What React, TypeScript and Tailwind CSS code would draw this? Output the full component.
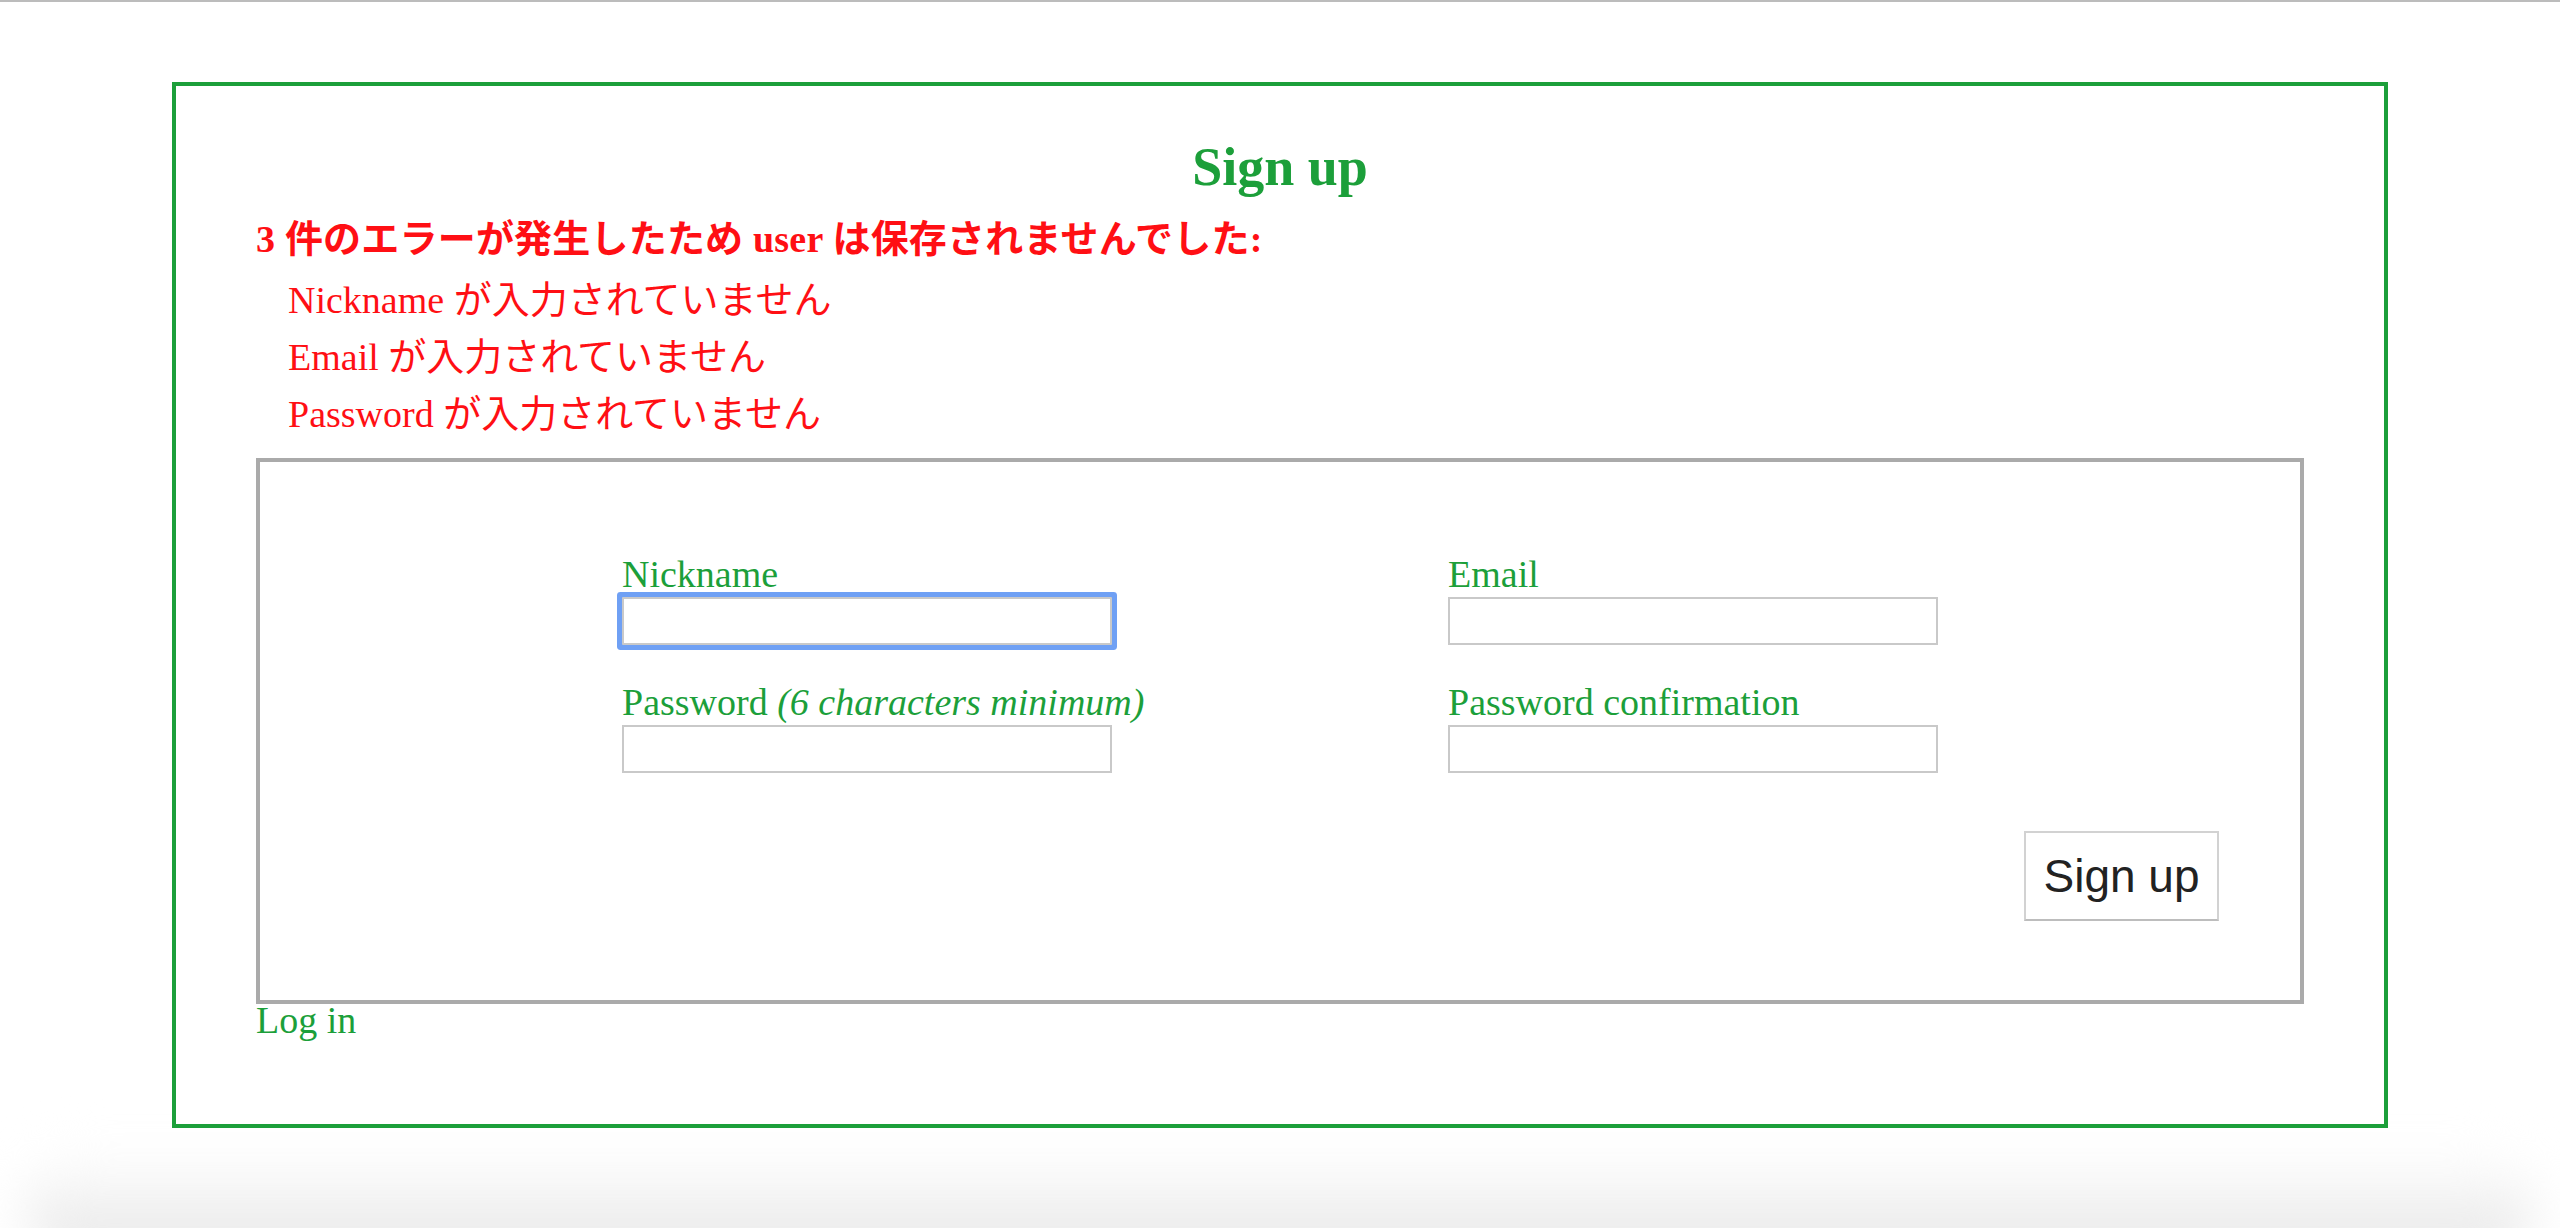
const errors = ['Nickname が入力されていません', 'Email が入力されていません', 'Password が入力されていません'];

const Field = ({ label, hint, focused }: { label: string; hint?: string; focused?: boolean }) => (
  <div className="flex flex-col">
    <label className="whitespace-nowrap text-[38px] leading-[44px] text-[#1c9f3a]">
      {label}
      {hint && <em> {hint}</em>}
    </label>
    <input
      type="text"
      className={`mt-[1px] h-[48px] w-[490px] border-2 border-[#c9c9c9] bg-white outline-none ${
        focused ? 'rounded-[1px] shadow-[0_0_0_5px_#6fa0f4]' : ''
      }`}
    />
  </div>
);

export default function App() {
  return (
    <div className="flex h-[1228px] w-[2560px] flex-col overflow-hidden bg-white font-['Liberation_Serif','Noto_Sans_CJK_JP',serif]">
      {/* window edge */}
      <div className="h-[2px] bg-[#bcbcbc]" />

      {/* Main card */}
      <div className="relative z-10 mx-[172px] mt-[80px] border-4 border-[#1c9f3a] bg-white px-[80px] pt-[50px] pb-[89px]">
        <h1 className="text-center text-[54px] font-bold leading-[62px] text-[#1c9f3a]">Sign up</h1>

        <h2 className="mt-[19px] text-[38px] font-bold leading-[44px] tracking-[0.2px] text-[#ff0f14]">
          3 件のエラーが発生したため user は保存されませんでした:
        </h2>
        <ul className="mt-[11px] pl-[32px]">
          {errors.map((msg) => (
            <li key={msg} className="text-[38px] leading-[57px] text-[#ff0f14]">
              {msg}
            </li>
          ))}
        </ul>

        {/* Form */}
        <form className="mt-[15px] border-4 border-[#aaaaaa] pt-[90px] pb-[79px]">
          <div className="grid grid-cols-[490px_490px] justify-center gap-x-[336px] gap-y-[35px]">
            <Field label="Nickname" focused />
            <Field label="Email" />
            <Field label="Password" hint="(6 characters minimum)" />
            <Field label="Password confirmation" />
          </div>
          <div className="mt-[58px] flex justify-end pr-[81px]">
            <button
              type="button"
              className="h-[90px] w-[195px] border-2 border-[#d2d2d2] border-b-[#bdbdbd] bg-white font-['Liberation_Sans',Arial,sans-serif] text-[46px] text-[#222222]"
            >
              Sign up
            </button>
          </div>
        </form>

        <a href="#" className="mt-[1px] block text-[38px] leading-[30px] text-[#1c9f3a]">
          Log in
        </a>
      </div>

      <div className="flex-1" />

      {/* bottom shadow of the window */}
      <div className="h-[76px] px-[24px]">
        <div className="h-[110px] rounded-[60px] bg-gradient-to-b from-white to-[#e4e4e4] blur-xl" />
      </div>
    </div>
  );
}
